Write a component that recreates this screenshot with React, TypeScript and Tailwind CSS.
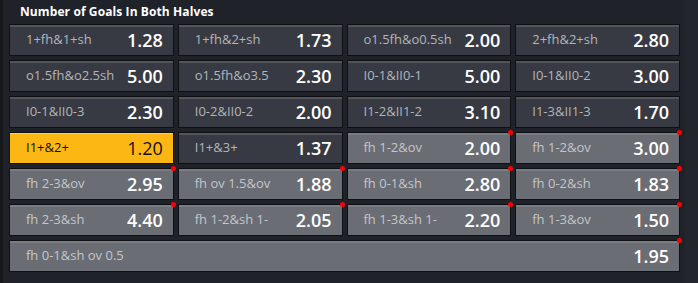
import React from 'react';

type Cell = { label: string; odds: string; tone: 'dark' | 'grey' | 'active'; dot?: boolean };

const cells: Cell[] = [
  { label: '1+fh&1+sh', odds: '1.28', tone: 'dark' },
  { label: '1+fh&2+sh', odds: '1.73', tone: 'dark' },
  { label: 'o1.5fh&o0.5sh', odds: '2.00', tone: 'dark' },
  { label: '2+fh&2+sh', odds: '2.80', tone: 'dark' },
  { label: 'o1.5fh&o2.5sh', odds: '5.00', tone: 'dark' },
  { label: 'o1.5fh&o3.5', odds: '2.30', tone: 'dark' },
  { label: 'I0-1&II0-1', odds: '5.00', tone: 'dark' },
  { label: 'I0-1&II0-2', odds: '3.00', tone: 'dark' },
  { label: 'I0-1&II0-3', odds: '2.30', tone: 'dark' },
  { label: 'I0-2&II0-2', odds: '2.00', tone: 'dark' },
  { label: 'I1-2&II1-2', odds: '3.10', tone: 'dark' },
  { label: 'I1-3&II1-3', odds: '1.70', tone: 'dark' },
  { label: 'I1+&2+', odds: '1.20', tone: 'active' },
  { label: 'I1+&3+', odds: '1.37', tone: 'dark' },
  { label: 'fh 1-2&ov', odds: '2.00', tone: 'grey', dot: true },
  { label: 'fh 1-2&ov', odds: '3.00', tone: 'grey', dot: true },
  { label: 'fh 2-3&ov', odds: '2.95', tone: 'grey', dot: true },
  { label: 'fh ov 1.5&ov', odds: '1.88', tone: 'grey', dot: true },
  { label: 'fh 0-1&sh', odds: '2.80', tone: 'grey', dot: true },
  { label: 'fh 0-2&sh', odds: '1.83', tone: 'grey', dot: true },
  { label: 'fh 2-3&sh', odds: '4.40', tone: 'grey', dot: true },
  { label: 'fh 1-2&sh 1-', odds: '2.05', tone: 'grey', dot: true },
  { label: 'fh 1-3&sh 1-', odds: '2.20', tone: 'grey', dot: true },
  { label: 'fh 1-3&ov', odds: '1.50', tone: 'grey', dot: true },
];

const OddsCell: React.FC<{ cell: Cell; wide?: boolean }> = ({ cell, wide }) => {
  const box =
    cell.tone === 'active'
      ? 'bg-[#fdb715] shadow-[inset_0_1px_0_#ffd060]'
      : cell.tone === 'grey'
      ? 'bg-[#6a6d74] shadow-[inset_0_2px_0_#7a7d83]'
      : 'bg-[#373a42] shadow-[inset_0_2px_0_#51545b]';
  const label = cell.tone === 'active' ? 'text-[#111]' : cell.tone === 'grey' ? 'text-[#c4c6ca]' : 'text-[#b3b5ba]';
  const odds = cell.tone === 'active' ? 'text-[#111] font-normal' : 'text-white font-semibold';
  return (
    <div
      className={`relative h-8 flex items-center justify-between pl-4 pr-[10px] border border-[#0f1014] ${box} ${
        wide ? 'col-span-4' : ''
      }`}
    >
      <span className={`text-[13px] leading-none -mt-[2px] ${label}`}>{cell.label}</span>
      <span className={`text-[18px] leading-none ${odds}`}>{cell.odds}</span>
      {cell.dot && <span className="absolute -top-[3px] -right-[3px] w-[5px] h-[5px] rounded-full bg-[#ff0000]" />}
    </div>
  );
};

const App: React.FC = () => {
  return (
    <div className="w-[698px] h-[283px] bg-[#1f2229] flex" style={{ fontFamily: '"Open Sans", Lato, sans-serif' }}>
      <div className="w-[3px] bg-[#15171b]" />
      <div className="flex-1 pl-[6px] pr-[5px]">
        <h2 className="pl-[11px] pt-[4px] h-6 text-[12px] tracking-[0.1px] font-bold text-white leading-[15px]">
          Number of Goals In Both Halves
        </h2>
        <div className="grid grid-cols-4 gap-1">
          {cells.map((c, i) => (
            <OddsCell key={i} cell={c} />
          ))}
          <OddsCell wide cell={{ label: 'fh 0-1&sh ov 0.5', odds: '1.95', tone: 'grey', dot: true }} />
        </div>
      </div>
      <div className="w-[13px] bg-[#23262d]" />
    </div>
  );
};

export default App;
